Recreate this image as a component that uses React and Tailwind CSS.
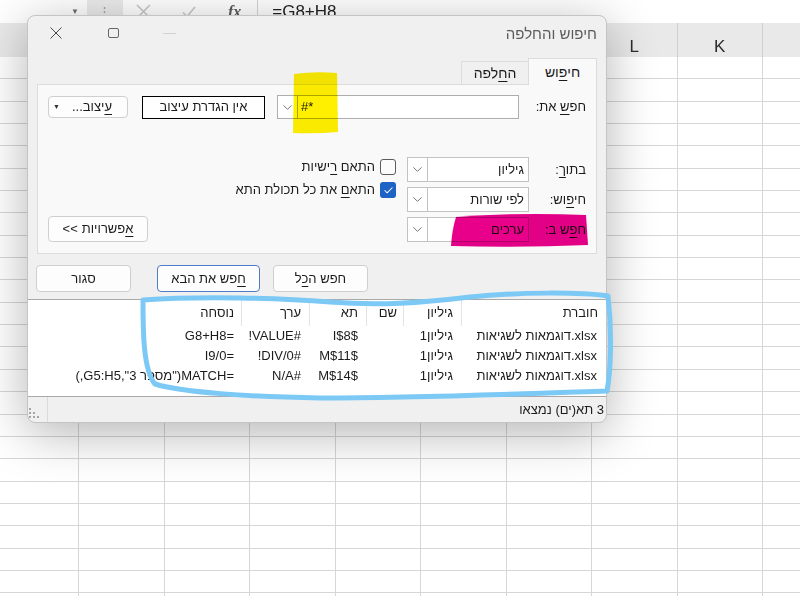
import { Check, ChevronDown } from 'lucide-react'

const COLUMNS = ['S', 'R', 'Q', 'P', 'O', 'N', 'M', 'L', 'K', '']
const ROWS = Array.from({ length: 25 })

const RESULTS = [
  { cell: '$I$8', value: '#VALUE!', formula: '=G8+H8' },
  { cell: '$M$11', value: '#DIV/0!', formula: '=I9/0' },
  { cell: '$M$14', value: '#N/A', formula: '=MATCH("מספר 3",G5:H5,)' },
]

function U({ children }) {
  return <span className="underline underline-offset-[3px]">{children}</span>
}

function Sheet() {
  return (
    <div className="flex h-full flex-col overflow-hidden bg-white font-['Liberation_Sans',sans-serif]">
      <div className="flex h-[23px] shrink-0 items-center">
        <span className="ml-[71px] text-[8px] text-[#6f6f6f]">▼</span>
        <div className="ml-[8px] flex h-full w-[36px] items-center justify-center bg-[#ebebeb] text-[13px] text-[#a3a3a3]">⋮</div>
        <svg className="ml-[12px]" width="17" height="17" viewBox="0 0 17 17">
          <path d="M2 2 L15 15 M15 2 L2 15" stroke="#c8c8c8" strokeWidth="1.6" />
        </svg>
        <svg className="ml-[30px]" width="14" height="12" viewBox="0 0 14 12">
          <path d="M1 6.5 L5 10.5 L13 1" stroke="#c8c8c8" strokeWidth="1.6" fill="none" />
        </svg>
        <span className="ml-[32px] font-['Liberation_Serif',serif] text-[16px] font-bold italic text-[#5a5a5a]">fx</span>
        <div className="ml-[16px] h-full w-px bg-[#d4d4d4]" />
        <span className="ml-[14px] text-[17px] text-[#222]">=G8+H8</span>
      </div>
      <div className="ml-[-6.5px] flex h-[34px] shrink-0 bg-[#e9e9e9]">
        {COLUMNS.map((c, i) => (
          <div key={i} className="flex w-[85.5px] shrink-0 items-end justify-center border-r border-[#cfcfcf] pb-[2px] text-[17px] leading-none text-[#2b2b2b]">
            {c}
          </div>
        ))}
      </div>
      {ROWS.map((_, i) => (
        <div key={i} className="ml-[-6.5px] flex h-[22.35px] shrink-0">
          {COLUMNS.map((c, j) => (
            <div key={j} className="w-[85.5px] shrink-0 border-r border-b border-[#d6d6d6]" />
          ))}
        </div>
      ))}
    </div>
  )
}

function Chevron() {
  return <ChevronDown size={15} strokeWidth={1.2} className="text-[#4a4a4a]" />
}

function Select({ value }) {
  return (
    <div className="flex h-[25px] w-[122px] border border-[#c3c3c3] bg-white">
      <div className="flex flex-1 items-center pr-[4px]">{value}</div>
      <div className="flex w-[20px] items-center justify-center border-r border-[#c3c3c3]">
        <Chevron />
      </div>
    </div>
  )
}

function Checkbox({ checked }) {
  if (checked) {
    return (
      <div className="flex h-[16px] w-[16px] items-center justify-center rounded-[3px] bg-[#1d63c6]">
        <Check size={11} strokeWidth={2.2} className="text-white" />
      </div>
    )
  }
  return <div className="h-[16px] w-[16px] rounded-[3px] border border-[#5c5c5c] bg-[#fbfbfb]" />
}

function Button({ children, className = '' }) {
  return (
    <div className={`flex h-[27px] items-center justify-center rounded-[4px] border bg-[#fdfdfd] ${className}`}>
      {children}
    </div>
  )
}

function FindDialog() {
  return (
    <div
      dir="rtl"
      className="absolute left-[27px] top-[15px] flex h-[408px] w-[580px] flex-col overflow-hidden rounded-[8px] border border-[#c4c4c4] bg-[#f0f0f0] font-['Liberation_Sans',sans-serif] text-[13px] text-[#1b1b1b] shadow-[0_10px_50px_rgba(0,0,0,0.3)]"
    >
      {/* title bar */}
      <div dir="ltr" className="flex h-[34px] shrink-0 items-center pl-[22px] pr-[9px]">
        <svg width="12" height="12" viewBox="0 0 12 12">
          <path d="M0.5 0.5 L11.5 11.5 M11.5 0.5 L0.5 11.5" stroke="#474747" strokeWidth="1" />
        </svg>
        <div className="ml-[46px] h-[10px] w-[11px] rounded-[2px] border border-[#666]" />
        <div className="ml-[44px] h-px w-[13px] bg-[#d2d2d2]" />
        <span dir="rtl" className="ml-auto text-[15px] leading-none text-[#5c5c5c]">חיפוש והחלפה</span>
      </div>

      {/* tabs */}
      <div className="mx-[9px] mt-[8px] flex h-[26px] shrink-0 items-end">
        <div className="relative z-10 -mb-px flex h-[27px] w-[69px] items-center justify-center border border-b-0 border-[#dcdcdc] bg-[#f9f9f9] text-[14px]">
          חי<U>פ</U>וש
        </div>
        <div className="flex h-[23px] w-[67px] items-center justify-center border border-b-0 border-r-0 border-[#dcdcdc] bg-[#f0f0f0] text-[14px]">
          ה<U>ח</U>לפה
        </div>
      </div>

      {/* panel */}
      <div className="mx-[9px] flex h-[170px] shrink-0 flex-col border border-[#dcdcdc] bg-[#f9f9f9] pl-[10px] pt-[10px]">
        <div className="flex h-[24px] items-center">
          <div className="w-[77px] pr-[10px]">
            חפ<U>ש</U> את:
          </div>
          <div className="flex h-[24px] w-[242px] border border-[#adadad] bg-white">
            <div dir="ltr" className="flex flex-1 items-center pl-[3px]">#*</div>
            <div className="flex w-[20px] items-center justify-center border-r border-[#adadad]">
              <Chevron />
            </div>
          </div>
          <div className="mr-[12px] flex h-[23px] w-[123px] items-center justify-center border border-black bg-white">
            אין הגדרת עיצוב
          </div>
          <div className="mr-[14px] flex h-[22px] w-[80px] items-center rounded-[4px] border border-[#cfcfcf] bg-[#fdfdfd] pl-[4px] pr-[15px]">
            <span><U>ע</U>יצוב...</span>
            <span className="mr-auto text-[7px] text-[#333]">▼</span>
          </div>
        </div>

        <div className="mt-[38px] flex">
          <div className="flex w-[67px] flex-col gap-[5px] pr-[10px]">
            <div className="flex h-[25px] items-center">
              בתו<U>ך</U>:
            </div>
            <div className="flex h-[25px] items-center">
              חי<U>פ</U>וש:
            </div>
            <div className="flex h-[25px] items-center">
              ח<U>פ</U>ש ב:
            </div>
          </div>
          <div className="flex flex-col gap-[5px]">
            <Select value="גיליון" />
            <Select value="לפי שורות" />
            <Select value="ערכים" />
          </div>
          <div className="mr-[11px] flex flex-col gap-[7px] pt-[2px]">
            <div className="flex h-[16px] items-center gap-[5px]">
              <Checkbox />
              <span>
                התאם <U>ר</U>ישיות
              </span>
            </div>
            <div className="flex h-[16px] items-center gap-[5px]">
              <Checkbox checked />
              <span>
                התא<U>ם</U> את כל תכולת התא
              </span>
            </div>
          </div>
          <div className="mr-auto flex h-[26px] w-[100px] items-center justify-center gap-[4px] self-end rounded-[4px] border border-[#cfcfcf] bg-[#fdfdfd]">
            <span>
              <U>א</U>פשרויות
            </span>
            <span dir="ltr">&lt;&lt;</span>
          </div>
        </div>
      </div>

      {/* action buttons */}
      <div dir="ltr" className="mt-[11px] flex shrink-0 pl-[8px]">
        <Button className="w-[95px] border-[#cfcfcf]">סגור</Button>
        <Button className="ml-[26px] w-[103px] border-[#4f7cc6]">
          <span dir="rtl">
            <U>ח</U>פש את הבא
          </span>
        </Button>
        <Button className="ml-[13px] w-[95px] border-[#cfcfcf]">
          <span dir="rtl">
            חפש ה<U>כ</U>ל
          </span>
        </Button>
      </div>

      {/* results */}
      <div className="mt-[7px] flex h-[98px] shrink-0 flex-col border-y border-[#a9a9a9] bg-white">
        <div className="flex h-[26px] shrink-0">
          <div className="flex w-[145px] items-center border-l border-[#e3e3e3] pr-[8px]">חוברת</div>
          <div className="flex w-[58px] items-center border-l border-[#e3e3e3] pr-[8px]">גיליון</div>
          <div className="flex w-[37px] items-center border-l border-[#e3e3e3] pr-[6px]">שם</div>
          <div className="flex w-[57px] items-center border-l border-[#e3e3e3] pr-[8px]">תא</div>
          <div className="flex w-[68px] items-center border-l border-[#e3e3e3] pr-[8px]">ערך</div>
          <div className="flex flex-1 items-center pr-[7px]">נוסחה</div>
        </div>
        {RESULTS.map((r) => (
          <div key={r.cell} className="flex h-[20px] shrink-0 items-center">
            <div className="w-[145px] pr-[9px]">
              <span dir="ltr">דוגמאות לשגיאות.xlsx</span>
            </div>
            <div className="w-[58px] pr-[8px]">
              <span dir="ltr">1גיליון</span>
            </div>
            <div className="w-[37px]" />
            <div className="w-[57px] pr-[8px]">{r.cell}</div>
            <div className="w-[68px] pr-[8px]">{r.value}</div>
            <div className="flex-1 whitespace-nowrap pr-[7px]">{r.formula}</div>
          </div>
        ))}
      </div>

      {/* status bar */}
      <div className="flex flex-1 items-center">
        <span className="pr-[2px]">3 תא(ים) נמצאו</span>
        <div dir="ltr" className="mr-auto flex h-full items-stretch">
          <svg className="mb-[3px] self-end" width="19" height="12" viewBox="0 0 19 12">
            <g fill="#a5a5a5">
              <rect x="1" y="1" width="2" height="2" />
              <rect x="1" y="5" width="2" height="2" />
              <rect x="5" y="5" width="2" height="2" />
              <rect x="1" y="9" width="2" height="2" />
              <rect x="5" y="9" width="2" height="2" />
              <rect x="9" y="9" width="2" height="2" />
            </g>
          </svg>
          <div className="w-px bg-[#dadada]" />
        </div>
      </div>
    </div>
  )
}

function Annotations() {
  return (
    <>
      <svg className="pointer-events-none absolute left-0 top-0 mix-blend-multiply" width="800" height="596" viewBox="0 0 800 596">
        <path d="M294 74 Q315 71 337 73 L338 132 Q316 134 293 133 Z" fill="#fff000" />
        <path d="M456 217 Q520 212 586 215 L588 245 Q520 248 451 246 Q452 230 456 217 Z" fill="#e8008a" />
      </svg>
      <svg className="pointer-events-none absolute left-0 top-0" width="800" height="596" viewBox="0 0 800 596">
        <path
          d="M143 300 C200 296 280 298 330 302 C380 306 420 303 470 297 C520 292 580 292 608 296 C612 330 611 370 607 391 C520 394 420 398 320 398 C250 397 180 392 155 384 C143 370 143 330 143 300"
          fill="none"
          stroke="#7cc9f6"
          strokeWidth="5"
          strokeLinecap="round"
          strokeLinejoin="round"
        />
      </svg>
    </>
  )
}

export default function App() {
  return (
    <div className="relative h-[596px] w-[800px] overflow-hidden bg-white">
      <Sheet />
      <FindDialog />
      <Annotations />
    </div>
  )
}
